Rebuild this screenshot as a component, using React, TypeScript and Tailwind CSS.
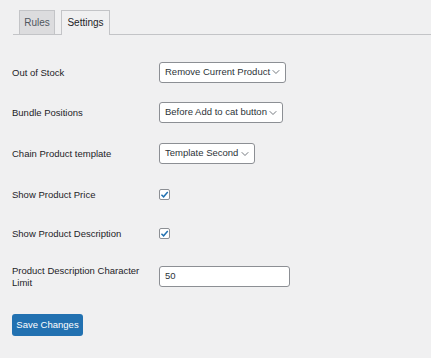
import { ChevronDown } from "lucide-react";

const font = "font-['Liberation_Sans',Arial,sans-serif]";

function Select({ value, width }: { value: string; width: string }) {
  return (
    <div
      className={`flex h-[21px] items-center justify-between rounded-[3px] border border-[#8c8f94] bg-white pl-[5px] pr-[3px] text-[9.5px] text-[#2c3338] ${width}`}
    >
      <span className="whitespace-nowrap">{value}</span>
      <ChevronDown className="h-[12px] w-[12px] text-[#50575e]" strokeWidth={1.6} />
    </div>
  );
}

function Checkbox() {
  return (
    <div className="flex h-[11px] w-[11px] items-center justify-center rounded-[2px] border border-[#8c8f94] bg-white">
      <svg viewBox="0 0 10 10" className="h-[9px] w-[9px]">
        <path d="M1.6 5.2 L4 7.6 L8.6 2.2" fill="none" stroke="#2271b1" strokeWidth="1.6" />
      </svg>
    </div>
  );
}

function Row({
  label,
  height,
  children,
}: {
  label: string;
  height: string;
  children: React.ReactNode;
}) {
  return (
    <div className={`flex items-center ${height}`}>
      <div className="w-[147px] pr-2 text-[9.5px] leading-[11px] text-[#1d2327]">{label}</div>
      <div>{children}</div>
    </div>
  );
}

export default function App() {
  return (
    <div className={`h-[358px] w-[431px] bg-[#f0f0f1] pl-[12px] pt-[10px] ${font}`}>
      {/* tabs */}
      <div className="ml-px flex h-[25px] items-end gap-[6px] border-b border-[#c3c4c7] pl-[6px]">
        <div className="flex h-[24px] w-[36px] items-center justify-center border border-b-0 border-[#c3c4c7] bg-[#dcdcde] text-[10px] text-[#50575e]">
          Rules
        </div>
        <div className="-mb-px flex h-[25px] w-[49px] items-center justify-center border border-b-0 border-[#c3c4c7] bg-[#f0f0f1] pb-px text-[10px] text-[#1d2327]">
          Settings
        </div>
      </div>

      <div className="mt-[17px]">
        <Row label="Out of Stock" height="h-[40px]">
          <Select value="Remove Current Product" width="w-[127px]" />
        </Row>
        <Row label="Bundle Positions" height="h-[41px]">
          <Select value="Before Add to cat button" width="w-[124px]" />
        </Row>
        <Row label="Chain Product template" height="h-[41px]">
          <Select value="Template Second" width="w-[96px]" />
        </Row>
        <Row label="Show Product Price" height="h-[40px]">
          <Checkbox />
        </Row>
        <Row label="Show Product Description" height="h-[38px]">
          <Checkbox />
        </Row>
        <div className="flex h-[49px] items-center">
          <div className="w-[147px] pr-[12px] text-[9.5px] leading-[11.5px] text-[#1d2327]">
            Product Description Character Limit
          </div>
          <div className="flex h-[21px] w-[131px] items-center rounded-[3px] border border-[#8c8f94] bg-white pl-[5px] text-[9.5px] text-[#2c3338]">
            50
          </div>
        </div>
      </div>

      <button className="mt-[13px] flex h-[22px] w-[71px] items-center justify-center rounded-[3px] bg-[#2271b1] text-[9.5px] text-white">
        Save Changes
      </button>
    </div>
  );
}
